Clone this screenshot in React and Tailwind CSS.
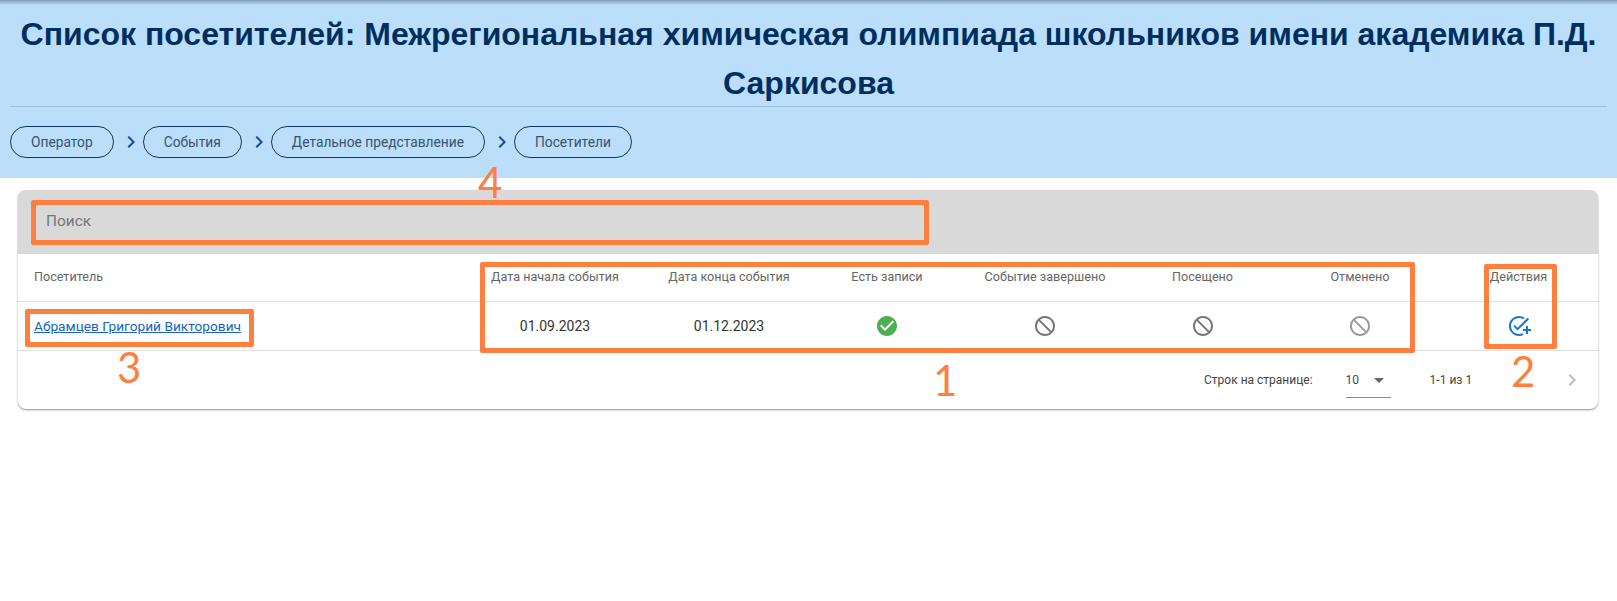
import { MdAddTask, MdArrowDropDown, MdBlock, MdCheckCircle, MdChevronRight } from 'react-icons/md';

const CRUMBS = ['Оператор', 'События', 'Детальное представление', 'Посетители'];

const COLUMNS = [
  'Дата начала события',
  'Дата конца события',
  'Есть записи',
  'Событие завершено',
  'Посещено',
  'Отменено',
  'Действия',
];

const GRID = 'grid grid-cols-[442px_190px_158px_158px_158px_157px_158px_159px]';

export default function App() {
  return (
    <div className="relative h-[601px] w-full overflow-hidden bg-white font-['Roboto',sans-serif]">
      {/* header */}
      <header className="h-[178px] bg-[#bbdefb] px-[10px] bg-[linear-gradient(to_bottom,#7f9cb8_0px,#bbdefb_5px)]">
        <h1 className="h-[107px] border-b border-[#9dc0dd] pt-[10px] text-center font-['Liberation_Sans',sans-serif] text-[32px] leading-[49px] font-bold text-[#002f5f]">
          Список посетителей: Межрегиональная химическая олимпиада школьников имени академика П.Д. Саркисова
        </h1>
        <nav className="mt-[19px] flex items-center">
          {CRUMBS.map((c, i) => (
            <div key={c} className="flex items-center">
              {i > 0 && <MdChevronRight className="ml-[5px] text-[24px] text-[#0d4f9a]" />}
              <span className="flex h-[32px] items-center rounded-full border border-[#0b3a68] px-[20px] text-[13.75px] text-[#37536e]">
                {c}
              </span>
            </div>
          ))}
        </nav>
      </header>

      {/* card */}
      <section className="mx-[18px] mt-[12px] h-[219px] w-[1580px] overflow-hidden rounded-[8px] bg-white shadow-[0_1px_2px_rgba(0,0,0,0.45)]">
        <div className="flex h-[64px] items-center bg-[#d9d9d9] pl-[28px] text-[15.4px] text-[#757575]">Поиск</div>

        <div className={`${GRID} h-[48px] items-center border-b border-[#e0e0e0] text-[12.6px] text-[#666]`}>
          <div className="pl-[16px]">Посетитель</div>
          {COLUMNS.map((c) => (
            <div key={c} className="text-center">{c}</div>
          ))}
        </div>

        <div className={`${GRID} h-[49px] items-center border-b border-[#e0e0e0] text-[14px] text-[#333]`}>
          <a className="pl-[16px] text-[13.7px] text-[#1565c0] underline">Абрамцев Григорий Викторович</a>
          <div className="text-center">01.09.2023</div>
          <div className="text-center">01.12.2023</div>
          <div className="flex justify-center"><MdCheckCircle className="text-[24px] text-[#4caf50]" /></div>
          <div className="flex justify-center"><MdBlock className="-scale-x-100 text-[24px] text-[#757575]" /></div>
          <div className="flex justify-center"><MdBlock className="-scale-x-100 text-[24px] text-[#757575]" /></div>
          <div className="flex justify-center"><MdBlock className="-scale-x-100 text-[24px] text-[#9a9a9a]" /></div>
          <div className="flex justify-center"><MdAddTask className="text-[24px] text-[#1976d2]" /></div>
        </div>

        <div className="flex h-[58px] items-center text-[12px] text-[#444]">
          <span className="ml-[1186px]">Строк на странице:</span>
          <div className="ml-[33px] flex h-[36px] w-[45px] items-center justify-between border-b border-[#8a8a8a] pt-[1px]">
            <span>10</span>
            <MdArrowDropDown className="text-[24px] text-[#666]" />
          </div>
          <span className="ml-[39px]">1-1 из 1</span>
          <MdChevronRight className="ml-[88px] text-[24px] text-[#bdbdbd]" />
        </div>
      </section>

      {/* orange annotations drawn over the screenshot */}
      <div className="absolute top-[200px] left-[31px] h-[45px] w-[898px] rounded-[2px] border-[5px] border-[#ff7f41]" />
      <div className="absolute top-[262px] left-[480px] h-[91px] w-[935px] rounded-[2px] border-[5px] border-[#ff7f41]" />
      <div className="absolute top-[264px] left-[1484px] h-[85px] w-[73px] rounded-[2px] border-[5px] border-[#ff7f41]" />
      <div className="absolute top-[309px] left-[25px] h-[38px] w-[229px] rounded-[2px] border-[5px] border-[#ff7f41]" />
      <span className="absolute top-[154px] left-[478px] font-['Lato',sans-serif] text-[42px] leading-[56px] text-[#ff7f41]">4</span>
      <span className="absolute top-[339px] left-[117px] font-['Lato',sans-serif] text-[42px] leading-[56px] text-[#ff7f41]">3</span>
      <span className="absolute top-[352px] left-[933px] font-['Lato',sans-serif] text-[42px] leading-[56px] text-[#ff7f41]">1</span>
      <span className="absolute top-[343px] left-[1511px] font-['Lato',sans-serif] text-[42px] leading-[56px] text-[#ff7f41]">2</span>
    </div>
  );
}
